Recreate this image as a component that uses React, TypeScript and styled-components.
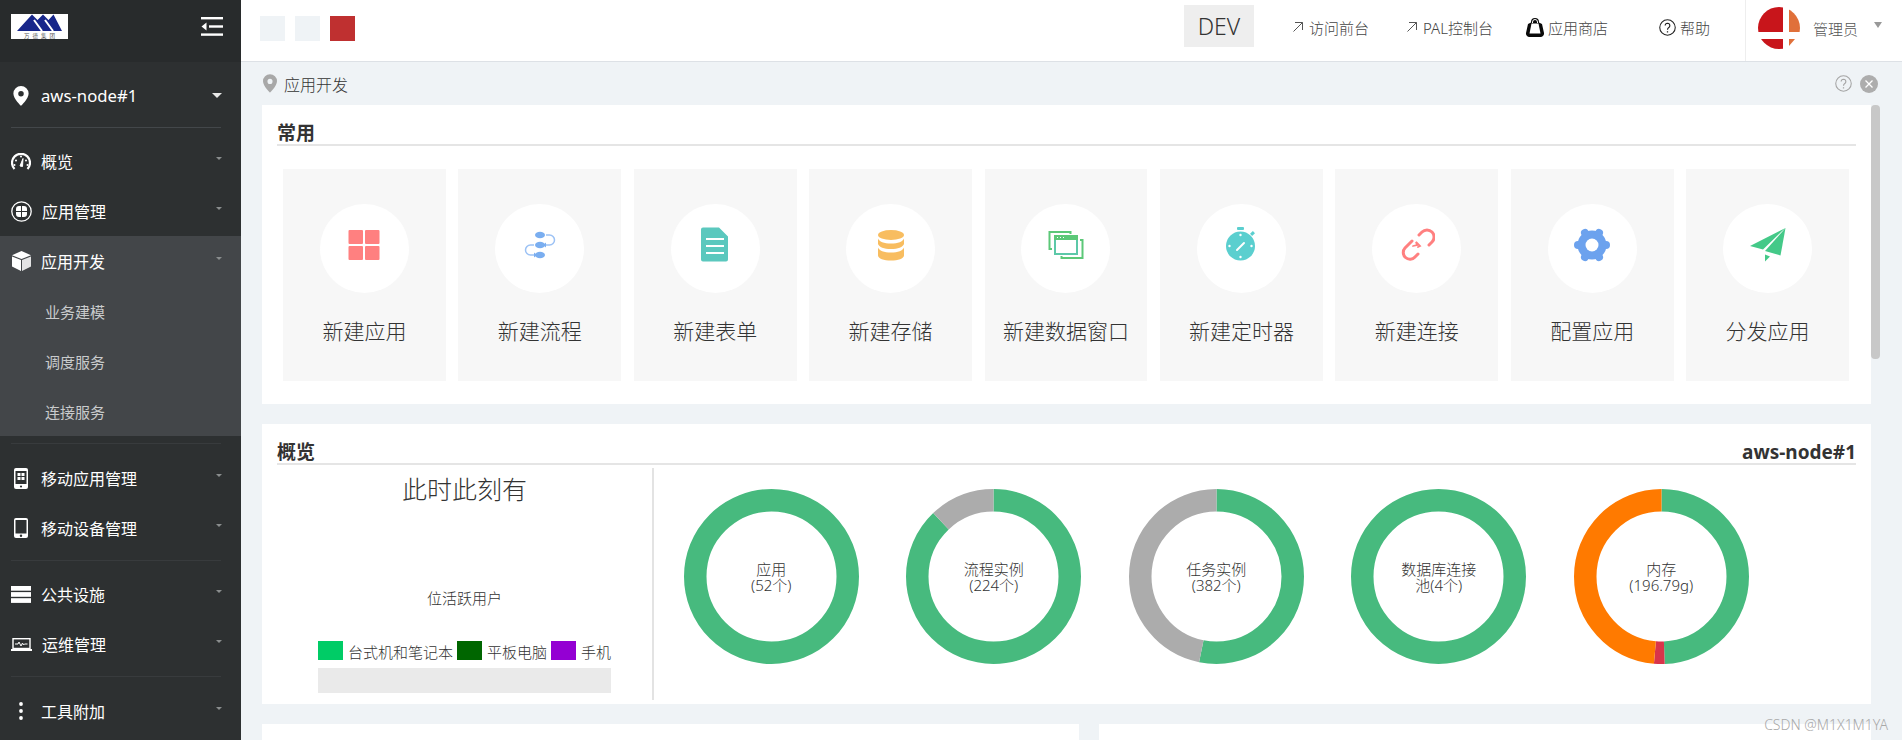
import React from 'react'
import styled, { createGlobalStyle } from 'styled-components'

const GlobalStyle = createGlobalStyle`
  html, body {
    margin: 0;
    height: 740px;
    overflow: hidden;
    background: #eff3f6;
    font-family: "Noto Sans", "Noto Sans CJK SC", sans-serif;
  }
  * { box-sizing: border-box; }
`

const Page = styled.div`
  display: flex;
  position: relative;
  width: 1902px;
  height: 740px;
  overflow: hidden;
`

/* ---------- sidebar ---------- */

const Sidebar = styled.aside`
  flex: 0 0 241px;
  background: #2d3031;
  color: #fff;
`
const SideTop = styled.div`
  display: flex;
  align-items: flex-start;
  justify-content: space-between;
  height: 62px;
  padding: 14px 18px 0 11px;
  background: #282b2c;
`
const FoldButton = styled.div`
  margin-top: 3px;
  line-height: 0;
`
const NodeRow = styled.div`
  display: flex;
  align-items: center;
  height: 65px;
  padding: 2px 19px 0 13px;
  font-size: 16.7px;
`
const NodeName = styled.span`
  margin-left: 12px;
  flex: 1;
`
const SideLine = styled.div<{ $color?: string; $top: number; $bottom: number }>`
  height: 1px;
  margin: ${(p) => p.$top}px 20px ${(p) => p.$bottom}px 11px;
  background: ${(p) => p.$color ?? '#383b3d'};
`
const SideItem = styled.div`
  display: flex;
  align-items: center;
  height: 50px;
  padding: 0 19px 0 11px;
  font-size: 16px;
  color: #fff;
`
const SideIcon = styled.span`
  display: flex;
  align-items: center;
  justify-content: center;
  flex: 0 0 20px;
  height: 24px;
  margin-right: 10px;
`
const SideLabel = styled.span`
  flex: 1;
`
const ActiveGroup = styled.div`
  background: #434649;
`
const SubItem = styled.div`
  display: flex;
  align-items: center;
  height: 50px;
  padding-left: 45px;
  font-size: 15px;
  color: #c9cbcc;
`
const Caret = styled.i<{ $w: number; $h: number; $color: string }>`
  display: block;
  width: 0;
  height: 0;
  border-left: ${(p) => p.$w / 2}px solid transparent;
  border-right: ${(p) => p.$w / 2}px solid transparent;
  border-top: ${(p) => p.$h}px solid ${(p) => p.$color};
`
const ItemCaret = styled(Caret)`
  margin-bottom: 5px;
`

/* ---------- header ---------- */

const Main = styled.main`
  flex: 1;
  display: flex;
  flex-direction: column;
  min-width: 0;
  > * { flex-shrink: 0; }
`
const Header = styled.header`
  display: flex;
  align-items: center;
  height: 62px;
  padding-left: 19px;
  background: #fff;
  border-bottom: 1px solid #dde1e6;
`
const Squares = styled.div`
  display: flex;
  gap: 10px;
  margin-right: auto;
  margin-top: -4px;
`
const Square = styled.span<{ $color: string }>`
  width: 25px;
  height: 25px;
  background: ${(p) => p.$color};
`
const DevBox = styled.div`
  display: flex;
  align-items: center;
  justify-content: center;
  width: 70px;
  height: 42px;
  margin-top: -9px;
  background: #eee;
  font-size: 23px;
  font-weight: 300;
  color: #333;
`
const NavLink = styled.div<{ $gap: number; $iconGap: number }>`
  display: flex;
  align-items: center;
  gap: ${(p) => p.$iconGap}px;
  margin-left: ${(p) => p.$gap}px;
  margin-top: -7px;
  font-size: 15px;
  font-weight: 300;
  color: #444;
`
const UserBox = styled.div`
  display: flex;
  align-items: center;
  align-self: stretch;
  margin-left: 35px;
  padding: 0 20px 5px 12px;
  border-left: 1px solid #eee;
`
const UserName = styled.span`
  margin: 0 16px 0 13px;
  font-size: 15px;
  font-weight: 300;
  color: #555;
`
const UserCaret = styled(Caret)`
  margin-bottom: 6px;
`

/* ---------- breadcrumb ---------- */

const Crumb = styled.div`
  display: flex;
  align-items: center;
  height: 43px;
  padding: 0 24px 0 22px;
  font-size: 16px;
  font-weight: 300;
  color: #333;
`
const CrumbText = styled.span`
  margin-left: 7px;
  flex: 1;
`
const CrumbTools = styled.div`
  display: flex;
  align-items: center;
  gap: 8px;
`

/* ---------- content ---------- */

const Content = styled.div`
  position: relative;
  display: flex;
  flex-direction: column;
  gap: 20px;
  padding: 0 31px 0 21px;
`
const Scrollbar = styled.div`
  position: absolute;
  top: 0;
  right: 22px;
  width: 9px;
  height: 254px;
  border-radius: 4px;
  background: #c8c8c8;
`
const Card = styled.section<{ $height: number }>`
  height: ${(p) => p.$height}px;
  padding: 0 15px;
  background: #fff;
`
const CardTitle = styled.div`
  display: flex;
  align-items: flex-end;
  justify-content: space-between;
  height: 41px;
  border-bottom: 2px solid #e5e5e5;
  font-size: 19px;
  font-weight: 700;
  line-height: 22px;
  color: #333;
`
const TileGrid = styled.div`
  display: grid;
  grid-template-columns: repeat(9, 1fr);
  gap: 12.6px;
  margin-top: 23px;
  padding: 0 7px 0 6px;
`
const Tile = styled.div`
  display: flex;
  flex-direction: column;
  align-items: center;
  height: 212px;
  padding-top: 35px;
  background: #f7f7f7;
`
const TileCircle = styled.div`
  display: flex;
  align-items: center;
  justify-content: center;
  width: 89px;
  height: 89px;
  padding-bottom: 7px;
  border-radius: 50%;
  background: #fff;
`
const TileLabel = styled.div`
  margin-top: 24px;
  font-size: 21px;
  line-height: 28px;
  font-weight: 300;
  white-space: nowrap;
  color: #333;
`
const OverviewBody = styled.div`
  display: flex;
  height: 232px;
  margin-top: 3px;
`
const ActivePanel = styled.div`
  flex: 0 0 377px;
  display: flex;
  flex-direction: column;
  align-items: center;
  padding-top: 3px;
  border-right: 2px solid #e3e3e3;
`
const ActiveTitle = styled.div`
  font-size: 25px;
  line-height: 36px;
  font-weight: 300;
  color: #333;
`
const ActiveSub = styled.div`
  margin-top: 81px;
  font-size: 15px;
  line-height: 20px;
  font-weight: 300;
  color: #333;
`
const Legend = styled.div`
  display: flex;
  align-items: center;
  margin-top: 33px;
  height: 19px;
`
const Swatch = styled.span<{ $color: string }>`
  width: 25px;
  height: 19px;
  margin-right: 5px;
  background: ${(p) => p.$color};
`
const LegendText = styled.span`
  margin-right: 4px;
  padding-top: 3px;
  font-size: 15px;
  line-height: 19px;
  font-weight: 300;
  white-space: nowrap;
  color: #333;
  &:last-child { margin-right: 0; }
`
const UsageBar = styled.div`
  width: 293px;
  height: 25px;
  margin-top: 8px;
  background: #eaeaea;
`
const DonutRow = styled.div`
  display: grid;
  grid-template-columns: repeat(5, 222.5px);
  padding: 21px 0 0 6px;
`
const DonutCell = styled.div`
  position: relative;
  justify-self: center;
  width: 175px;
  height: 175px;
`
const DonutText = styled.div`
  position: absolute;
  inset: 0;
  display: flex;
  flex-direction: column;
  align-items: center;
  justify-content: center;
  font-size: 15px;
  font-weight: 300;
  color: #333;
`
const DonutLine = styled.div`
  height: 16px;
  line-height: 16px;
  white-space: nowrap;
`
const BottomRow = styled.div`
  display: grid;
  grid-template-columns: 817fr 772fr;
  gap: 20px;
`
const BottomCard = styled.div`
  height: 60px;
  background: #fff;
`
const Watermark = styled.div`
  position: absolute;
  top: 716px;
  right: 14px;
  font-size: 14px;
  line-height: 18px;
  font-weight: 300;
  color: #a9a9a9;
`

/* ---------- drawings ---------- */

const Logo = () => (
  <svg width="57" height="25" viewBox="0 0 57 25">
    <rect width="57" height="25" fill="#fff" />
    <path d="M6 17 L21 .5 L26.500 6 L32 .5 L37.500 6 L42.500 .5 L51 17Z" fill="#17268a" />
    <path d="M23 6 L31 17M34 6 L42 17" stroke="#fff" strokeWidth="2" />
    <text x="13" y="24" fontSize="5.500" letterSpacing="3" fill="#555">万德集团</text>
  </svg>
)

const MenuFold = () => (
  <svg width="22" height="19" viewBox="0 0 22 19" fill="#fff">
    <rect y="0" width="22" height="2.4" />
    <rect x="8" y="8.300" width="14" height="2.4" />
    <rect y="16.4" width="22" height="2.4" />
    <path d="M5.500 5.500 V13.500 L.5 9.500Z" />
  </svg>
)

const Pin = ({ color, w, h }: { color: string; w: number; h: number }) => (
  <svg width={w} height={h} viewBox="0 0 16 21">
    <path fillRule="evenodd" fill={color} d="M8 0a8 8 0 0 0-8 8c0 5.5 8 13 8 13s8-7.500 8-13a8 8 0 0 0-8-8zm0 5.200a2.900 2.900 0 1 1 0 5.800 2.900 2.900 0 0 1 0-5.800z" />
  </svg>
)

const sideIcons: Record<string, React.ReactNode> = {
  gauge: (
    <svg width="20" height="17" viewBox="0 0 20 17" fill="none" stroke="#fff">
      <path d="M3.500 16A9 9 0 1 1 16.500 16" strokeWidth="2.200" />
      <path d="M9 13 L12 5.500 L11.500 13.500Z" fill="#fff" strokeWidth="1" />
      <path d="M5 7.500v.1M10 3.500v.1M3.500 12v.1M16.500 12v.1M15 7.500v.1" strokeWidth="2" strokeLinecap="round" />
    </svg>
  ),
  grid: (
    <svg width="21" height="21" viewBox="0 0 21 21">
      <circle cx="10.500" cy="10.500" r="9.700" fill="none" stroke="#fff" strokeWidth="1.300" />
      <path fill="#fff" d="M5 8a3 3 0 0 1 3-3h2v5H5zM11 5h2a3 3 0 0 1 3 3v2h-5zM5 11h5v5H8a3 3 0 0 1-3-3zM11 11h5v2a3 3 0 0 1-3 3h-2z" />
    </svg>
  ),
  cube: (
    <svg width="19" height="20" viewBox="0 0 19 20" fill="#fff">
      <path d="M9.500 0 L19 4.200 L9.500 8 L0 4.200Z" />
      <path d="M0 5.500 L9 9 V20 L0 15.500Z" />
      <path d="M19 5.500 L10 9 V20 L19 15.500Z" opacity=".85" />
    </svg>
  ),
  phoneGrid: (
    <svg width="14" height="21" viewBox="0 0 14 21">
      <rect width="14" height="21" rx="2" fill="#fff" />
      <rect x="1.500" y="3" width="11" height="13" fill="#2d3031" />
      <path fill="#fff" d="M3.500 5h3v3h-3zM7.500 5h3v3h-3zM3.500 9h3v3h-3zM7.500 9h3v3h-3z" />
      <circle cx="7" cy="18.500" r="1.100" fill="#2d3031" />
    </svg>
  ),
  phone: (
    <svg width="14" height="20" viewBox="0 0 14 20">
      <rect width="14" height="20" rx="2" fill="#fff" />
      <rect x="1.500" y="2" width="11" height="13.500" fill="#2d3031" />
      <circle cx="7" cy="17.700" r="1.200" fill="#2d3031" />
    </svg>
  ),
  stack: (
    <svg width="20" height="17" viewBox="0 0 20 17" fill="#fff">
      <rect width="20" height="4.700" />
      <rect y="6.100" width="20" height="4.700" />
      <rect y="12.200" width="20" height="4.700" />
    </svg>
  ),
  laptop: (
    <svg width="21" height="13" viewBox="0 0 21 13" fill="none" stroke="#fff">
      <rect x="2" y=".7" width="17" height="9.800" strokeWidth="1.400" />
      <path d="M0 12h21" strokeWidth="2" />
      <path d="M4 6h3l1-2 2 4 1.500-3 1 2 1-1h3" strokeWidth="1" />
    </svg>
  ),
  dots: (
    <svg width="4" height="18" viewBox="0 0 4 18" fill="#fff">
      <circle cx="2" cy="2" r="1.900" />
      <circle cx="2" cy="9" r="1.900" />
      <circle cx="2" cy="16" r="1.900" />
    </svg>
  ),
}

const Arrow = () => (
  <svg width="12" height="12" viewBox="0 0 12 12" fill="none" stroke="#555" strokeWidth="1">
    <path d="M3 1.500h7.500V9M10.500 1.500 1.500 10.500" />
  </svg>
)
const Bag = () => (
  <svg width="20" height="20" viewBox="0 0 20 20">
    <path d="M6 5.500V5a4 4 0 0 1 8 0v.5l3 1.500 2 9a3.500 3.500 0 0 1-3.500 4h-11A3.500 3.500 0 0 1 1 16l2-9z" fill="#0a0a0a" />
    <path d="M6.500 6.500 L13.500 6.500 L15.500 16.500 L4.500 16.500Z" fill="#fff" />
    <path d="M7.500 6V5a2.500 2.500 0 0 1 5 0v1" stroke="#fff" fill="none" />
  </svg>
)
const Help = ({ size, color }: { size: number; color: string }) => (
  <svg width={size} height={size} viewBox="0 0 16 16" fill="none" stroke={color}>
    <circle cx="8" cy="8" r="7.300" strokeWidth="1" />
    <path d="M5.800 6.200a2.200 2.200 0 1 1 3.400 1.900c-.8.5-1.200 1-1.200 2" strokeWidth="1.100" />
    <path d="M8 11.500v1.200" strokeWidth="1.200" />
  </svg>
)
const CloseDot = () => (
  <svg width="18" height="18" viewBox="0 0 18 18">
    <circle cx="9" cy="9" r="9" fill="#adadad" />
    <path d="M5.500 5.500l7 7M12.500 5.500l-7 7" stroke="#fff" strokeWidth="1.300" />
  </svg>
)
const Avatar = () => (
  <svg width="42" height="42" viewBox="0 0 42 42">
    <defs>
      <clipPath id="avatar-clip"><circle cx="21" cy="21" r="21" /></clipPath>
    </defs>
    <g clipPath="url(#avatar-clip)">
      <rect width="25" height="25" fill="#c8151b" />
      <rect y="32" width="25" height="10" fill="#c8151b" />
      <rect x="31" width="11" height="25" fill="#e0703a" />
      <path d="M31 32h6l-6 7z" fill="#e0703a" />
    </g>
  </svg>
)

const tileIcons: Record<string, React.ReactNode> = {
  grid: (
    <svg width="36" height="36" viewBox="0 0 36 36" fill="#ff8080">
      <rect x="2.500" y="3" width="14.500" height="14" rx="1" />
      <rect x="19" y="3" width="14.500" height="14" rx="1" />
      <rect x="2.500" y="19" width="14.500" height="14" rx="1" />
      <rect x="19" y="19" width="14.500" height="14" rx="1" />
    </svg>
  ),
  flow: (
    <svg width="36" height="36" viewBox="0 0 36 36">
      <g fill="#7aaef0">
        <ellipse cx="18" cy="8" rx="5" ry="3.200" />
        <ellipse cx="18" cy="18" rx="5" ry="3.200" />
        <ellipse cx="18" cy="28" rx="5" ry="3.200" />
        <path d="M24 15.500v5l-3-2.500zM12 25.500v5l3-2.500z" />
      </g>
      <g fill="none" stroke="#9cc2f5" strokeWidth="1.500">
        <path d="M24 8h3.500a5 5 0 0 1 0 10H24" />
        <path d="M12 18H8.500a5 5 0 0 0 0 10H12" />
      </g>
    </svg>
  ),
  doc: (
    <svg width="36" height="36" viewBox="0 0 36 36">
      <path fill="#5bc8be" d="M6 .5h16l9 9v23a2 2 0 0 1-2 2H6a2 2 0 0 1-2-2V2.500a2 2 0 0 1 2-2z" />
      <path stroke="#fff" strokeWidth="2.200" d="M9 12h18M9 19h18M9 26h18" />
    </svg>
  ),
  db: (
    <svg width="36" height="36" viewBox="0 0 36 36" fill="#f8bd60">
      <ellipse cx="18" cy="8" rx="13" ry="5" />
      <path d="M5 11.500c1 3 6 5 13 5s12-2 13-5v5.500c-1 3-6 5-13 5s-12-2-13-5z" />
      <path d="M5 20.500c1 3 6 5 13 5s12-2 13-5v8c0 3-6 5-13 5s-13-2-13-5z" />
    </svg>
  ),
  windows: (
    <svg width="36" height="36" viewBox="0 0 36 36">
      <g fill="none" stroke="#5cc878" strokeWidth="2">
        <path d="M4 22H1.500V5h21v2" />
        <path d="M32 13h2.500v18h-21v-2" />
        <rect x="7" y="9" width="22" height="18" stroke="#5cc8a8" />
      </g>
      <rect x="6" y="8" width="24" height="5" fill="#5cc878" />
      <path d="M9 10.500h1M12 10.500h1M15 10.500h1" stroke="#fff" />
    </svg>
  ),
  timer: (
    <svg width="36" height="36" viewBox="0 0 36 36">
      <g fill="#5bcfcf">
        <rect x="14" y="0" width="7" height="3" rx="1" />
        <circle cx="17.500" cy="19" r="14.500" />
        <rect x="28" y="4.500" width="3" height="4" transform="rotate(45 29.500 6.500)" />
      </g>
      <path d="M14 23l7-7" stroke="#fff" strokeWidth="2" strokeLinecap="round" />
      <g fill="#fff">
        <circle cx="17.500" cy="8" r="1.200" />
        <circle cx="17.500" cy="30" r="1.200" />
        <circle cx="6.500" cy="19" r="1.200" />
        <circle cx="28.500" cy="19" r="1.200" />
      </g>
    </svg>
  ),
  link: (
    <svg width="36" height="36" viewBox="0 0 36 36" fill="none" stroke="#ff8080" strokeWidth="3" strokeLinecap="round">
      <path d="M20 8l3-3a7 7 0 0 1 10 10l-3 3" />
      <path d="M13 14l-7 7a6.500 6.500 0 0 0 10 9l3-3" />
      <path d="M14 19l4-1-1-3 4 4-2 1" strokeWidth="1.800" />
    </svg>
  ),
  gear: (
    <svg width="36" height="36" viewBox="0 0 36 36">
      <g fill="#6ca2ee">
        <circle cx="18" cy="18" r="14.500" />
        {[0, 60, 120, 180, 240, 300].map((a) => (
          <circle key={a} cx="18" cy="18" r="4" transform={`rotate(${a} 18 18) translate(14 0)`} />
        ))}
      </g>
      <circle cx="18" cy="18" r="6.500" fill="#fff" />
    </svg>
  ),
  plane: (
    <svg width="36" height="36" viewBox="0 0 36 36" fill="#44c988">
      <path d="M35.500 1 0 19 13 22.500 31 5z" />
      <path d="M35.500 1 15 24 30.500 28.500z" />
      <path d="M15 27.500 15 34.500 20 29.500z" />
    </svg>
  ),
}

type Segment = { color: string; len: number }

const GREEN = '#47ba7e'
const GRAY = '#acacac'

const Donut = ({ segments }: { segments: Segment[] }) => {
  let from = 0
  return (
    <svg width="175" height="175" viewBox="0 0 175 175">
      <g transform="rotate(-90 87.500 87.500)" fill="none" strokeWidth="22.500">
        {segments.map((s) => {
          const offset = -from
          from += s.len
          return (
            <circle
              key={s.color}
              cx="87.500"
              cy="87.500"
              r="76.250"
              pathLength={100}
              stroke={s.color}
              strokeDasharray={`${s.len} ${100 - s.len}`}
              strokeDashoffset={offset}
            />
          )
        })}
      </g>
    </svg>
  )
}

/* ---------- data ---------- */

const tiles = [
  { icon: 'grid', label: '新建应用' },
  { icon: 'flow', label: '新建流程' },
  { icon: 'doc', label: '新建表单' },
  { icon: 'db', label: '新建存储' },
  { icon: 'windows', label: '新建数据窗口' },
  { icon: 'timer', label: '新建定时器' },
  { icon: 'link', label: '新建连接' },
  { icon: 'gear', label: '配置应用' },
  { icon: 'plane', label: '分发应用' },
]

const donuts = [
  { lines: ['应用', '(52个)'], segments: [{ color: GREEN, len: 100 }] },
  { lines: ['流程实例', '(224个)'], segments: [{ color: GREEN, len: 87.9 }, { color: GRAY, len: 12.1 }] },
  { lines: ['任务实例', '(382个)'], segments: [{ color: GREEN, len: 53.2 }, { color: GRAY, len: 46.8 }] },
  { lines: ['数据库连接', '池(4个)'], segments: [{ color: GREEN, len: 100 }] },
  {
    lines: ['内存', '(196.79g)'],
    segments: [{ color: GREEN, len: 49.4 }, { color: '#d9344a', len: 2 }, { color: '#ff7a00', len: 48.6 }],
  },
]

const MenuRow = ({ icon, label }: { icon: string; label: string }) => (
  <SideItem>
    <SideIcon>{sideIcons[icon]}</SideIcon>
    <SideLabel>{label}</SideLabel>
    <ItemCaret $w={6} $h={3} $color="#8a8d8e" />
  </SideItem>
)

export default function App() {
  return (
    <Page>
      <GlobalStyle />
      <Sidebar>
        <SideTop>
          <Logo />
          <FoldButton><MenuFold /></FoldButton>
        </SideTop>
        <NodeRow>
          <Pin color="#fff" w={16} h={20} />
          <NodeName>aws-node#1</NodeName>
          <Caret $w={10} $h={5} $color="#e8e8e8" />
        </NodeRow>
        <SideLine $color="#43474a" $top={0} $bottom={8} />
        <MenuRow icon="gauge" label="概览" />
        <MenuRow icon="grid" label="应用管理" />
        <ActiveGroup>
          <MenuRow icon="cube" label="应用开发" />
          <SubItem>业务建模</SubItem>
          <SubItem>调度服务</SubItem>
          <SubItem>连接服务</SubItem>
        </ActiveGroup>
        <SideLine $top={7} $bottom={9} />
        <MenuRow icon="phoneGrid" label="移动应用管理" />
        <MenuRow icon="phone" label="移动设备管理" />
        <SideLine $top={7} $bottom={8} />
        <MenuRow icon="stack" label="公共设施" />
        <MenuRow icon="laptop" label="运维管理" />
        <SideLine $top={7} $bottom={9} />
        <MenuRow icon="dots" label="工具附加" />
      </Sidebar>

      <Main>
        <Header>
          <Squares>
            <Square $color="#eff3f6" />
            <Square $color="#eff3f6" />
            <Square $color="#bf3030" />
          </Squares>
          <DevBox>DEV</DevBox>
          <NavLink $gap={38} $iconGap={5}><Arrow />访问前台</NavLink>
          <NavLink $gap={37} $iconGap={5}><Arrow />PAL控制台</NavLink>
          <NavLink $gap={32} $iconGap={3}><Bag />应用商店</NavLink>
          <NavLink $gap={51} $iconGap={4}><Help size={17} color="#222" />帮助</NavLink>
          <UserBox>
            <Avatar />
            <UserName>管理员</UserName>
            <UserCaret $w={8} $h={6} $color="#999" />
          </UserBox>
        </Header>

        <Crumb>
          <Pin color="#a8a8a8" w={14} h={19} />
          <CrumbText>应用开发</CrumbText>
          <CrumbTools>
            <Help size={17} color="#a5a5a5" />
            <CloseDot />
          </CrumbTools>
        </Crumb>

        <Content>
          <Scrollbar />
          <Card $height={299}>
            <CardTitle><span>常用</span></CardTitle>
            <TileGrid>
              {tiles.map((t) => (
                <Tile key={t.label}>
                  <TileCircle>{tileIcons[t.icon]}</TileCircle>
                  <TileLabel>{t.label}</TileLabel>
                </Tile>
              ))}
            </TileGrid>
          </Card>

          <Card $height={280}>
            <CardTitle>
              <span>概览</span>
              <span>aws-node#1</span>
            </CardTitle>
            <OverviewBody>
              <ActivePanel>
                <ActiveTitle>此时此刻有</ActiveTitle>
                <ActiveSub>位活跃用户</ActiveSub>
                <Legend>
                  <Swatch $color="#00cc66" />
                  <LegendText>台式机和笔记本</LegendText>
                  <Swatch $color="#006600" />
                  <LegendText>平板电脑</LegendText>
                  <Swatch $color="#9400d3" />
                  <LegendText>手机</LegendText>
                </Legend>
                <UsageBar />
              </ActivePanel>
              <DonutRow>
                {donuts.map((d) => (
                  <DonutCell key={d.lines[0]}>
                    <Donut segments={d.segments} />
                    <DonutText>
                      {d.lines.map((line) => (
                        <DonutLine key={line}>{line}</DonutLine>
                      ))}
                    </DonutText>
                  </DonutCell>
                ))}
              </DonutRow>
            </OverviewBody>
          </Card>

          <BottomRow>
            <BottomCard />
            <BottomCard />
          </BottomRow>
        </Content>
      </Main>
      <Watermark>CSDN @M1X1M1YA</Watermark>
    </Page>
  )
}
